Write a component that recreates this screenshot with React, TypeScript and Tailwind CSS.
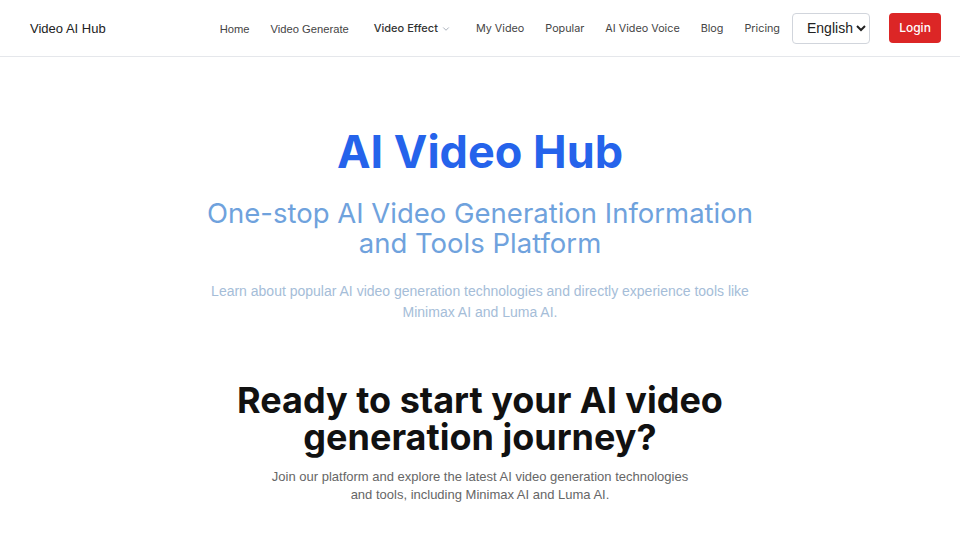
import { ChevronDown } from 'lucide-react'

const navItems = ['Popular', 'AI Video Voice', 'Blog', 'Pricing']

export default function App() {
  return (
    <div className="min-h-screen bg-white font-['Inter',sans-serif]">
      {/* header */}
      <header className="flex h-[57px] items-center justify-between border-b border-gray-200 pl-[30px] pr-[19px]">
        <div className="pt-[1px] font-['Liberation_Sans',Arial,sans-serif] text-[13px] text-[#222]">Video AI Hub</div>
        <nav className="flex items-center text-[10.8px] text-[#444]">
          <a className="pt-[3px] font-['Liberation_Sans',Arial,sans-serif] text-[11.2px]">Home</a>
          <a className="ml-[21px] pt-[3px] font-['Liberation_Sans',Arial,sans-serif] text-[11.2px]">Video Generate</a>
          <button className="ml-[25px] flex items-center gap-[3px] pt-[1px] text-[11px] font-medium text-[#333]">
            Video Effect
            <ChevronDown className="h-[10px] w-[10px] text-gray-400" strokeWidth={2} />
          </button>
          <a className="ml-[25px] pt-[2px]">My Video</a>
          {navItems.map(item => (
            <a key={item} className="ml-[21px] pt-[2px]">{item}</a>
          ))}
          <select className="ml-[12px] h-[31px] w-[78px] rounded-[4px] border border-gray-300 bg-white pl-[10px] font-['Liberation_Sans',Arial,sans-serif] text-[14px] text-[#222]">
            <option>English</option>
          </select>
          <button className="ml-[19px] h-[30px] w-[52px] rounded-[4px] bg-[#dc2626] text-[12px] font-medium text-white">
            Login
          </button>
        </nav>
      </header>

      {/* hero */}
      <section className="flex flex-col items-center px-4 pt-[73px] text-center">
        <h1 className="text-[45px] font-bold leading-[44px] text-[#2563eb]">AI Video Hub</h1>
        <h2 className="mt-[24px] max-w-[570px] text-[27.5px] leading-[30px] text-[#6fa2dd]">
          One-stop AI Video Generation Information and Tools Platform
        </h2>
        <p className="mt-[23px] max-w-[560px] font-['Liberation_Sans',Arial,sans-serif] text-[14px] leading-[21px] text-[#a5bdd8]">
          Learn about popular AI video generation technologies and directly experience tools like Minimax AI and Luma AI.
        </p>
      </section>

      {/* cta */}
      <section className="flex flex-col items-center px-4 pt-[59px] text-center">
        <h2 className="max-w-[500px] text-[36px] font-bold leading-[37px] text-[#111]">
          Ready to start your AI video generation journey?
        </h2>
        <p className="mt-[12px] max-w-[432px] font-['Liberation_Sans',Arial,sans-serif] text-[13px] leading-[18px] text-[#666]">
          Join our platform and explore the latest AI video generation technologies and tools, including Minimax AI and Luma AI.
        </p>
      </section>
    </div>
  )
}
